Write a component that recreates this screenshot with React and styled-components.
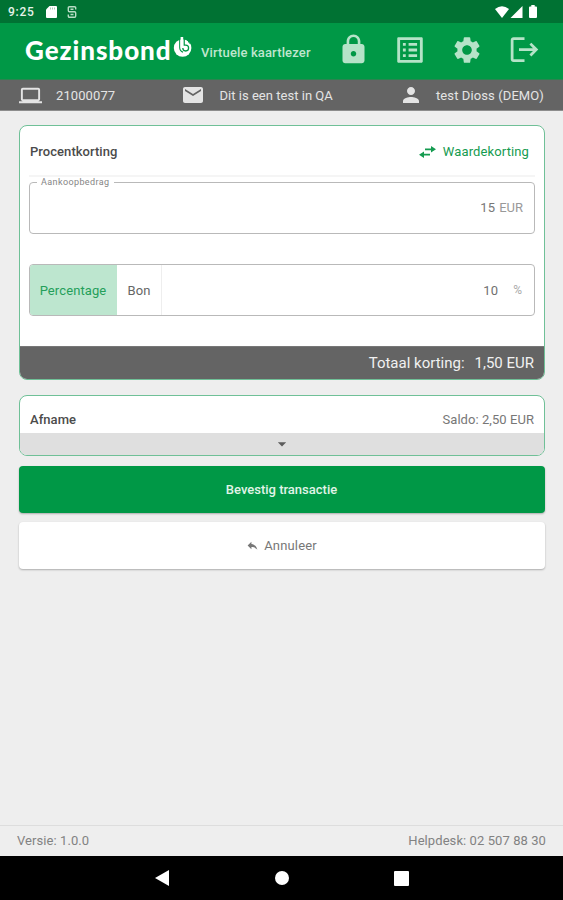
import React from "react";
import styled, { createGlobalStyle } from "styled-components";
import {
  MdLock,
  MdListAlt,
  MdSettings,
  MdLogout,
  MdLaptop,
  MdEmail,
  MdPerson,
  MdReply,
  MdArrowDropDown,
} from "react-icons/md";

const GlobalStyle = createGlobalStyle`
  * {
    box-sizing: border-box;
  }
  body {
    margin: 0;
    background-color: #eeeeee;
    font-family: Roboto, "Liberation Sans", sans-serif;
  }
  svg {
    display: block;
    flex-shrink: 0;
  }
`;

const Screen = styled.div`
  display: flex;
  flex-direction: column;
  width: 563px;
  height: 900px;
  background-color: #eeeeee;
  overflow: hidden;
`;

const StatusBar = styled.div`
  display: flex;
  align-items: center;
  height: 23px;
  padding: 0 26px 0 8px;
  background-color: #007233;
  color: #e6f3ea;
`;
const Clock = styled.span`
  width: 38px;
  padding-top: 1px;
  font-size: 12px;
  font-weight: 500;
  letter-spacing: 0.7px;
`;
const StatusIcons = styled.div`
  display: flex;
  align-items: center;
  gap: ${(props) => props.$gap}px;
  margin-left: ${(props) => (props.$end ? "auto" : "0")};
  padding-top: ${(props) => (props.$end ? "0" : "1px")};
`;

const Header = styled.header`
  display: flex;
  align-items: center;
  height: 57px;
  padding: 0 23px 3px 25px;
  background-color: #009846;
  border-bottom: 1px solid #2b8450;
`;
const Logo = styled.div`
  display: flex;
  width: 176px;
  height: 34px;
`;
const LogoText = styled.span`
  width: 148px;
  color: white;
  font-family: Lato, sans-serif;
  font-size: 26px;
  font-weight: 900;
  line-height: 34px;
  letter-spacing: 0.95px;
`;
const LogoBadge = styled.div`
  padding-top: 4px;
`;
const Subtitle = styled.span`
  padding-top: 6px;
  color: #bfe6ce;
  font-size: 13px;
  font-weight: 500;
  letter-spacing: 0.14px;
  white-space: nowrap;
`;
const HeaderActions = styled.nav`
  display: flex;
  align-items: center;
  gap: 25px;
  margin-left: auto;
  color: #b5e3c8;
`;
const IconButton = styled.button`
  display: flex;
  align-items: center;
  justify-content: center;
  width: 32px;
  height: 34px;
  padding: 0;
  border: none;
  background: none;
  color: inherit;
`;

const InfoBar = styled.div`
  display: flex;
  justify-content: space-between;
  height: 31px;
  padding: 0 19px;
  background-color: #646464;
  border-bottom: 1px solid #8d8d8d;
  color: #e4e4e4;
  font-size: 13px;
`;
const InfoItem = styled.div`
  display: flex;
  align-items: center;
  gap: ${(props) => props.$gap}px;
  letter-spacing: ${(props) => props.$spacing}px;
  white-space: nowrap;
`;

const Main = styled.main`
  display: flex;
  flex: 1;
  flex-direction: column;
  padding: 14px 18px 0 19px;
`;
const Card = styled.section`
  display: flex;
  flex-direction: column;
  height: ${(props) => props.$height}px;
  margin-bottom: ${(props) => props.$space}px;
  border: 1px solid #6fc097;
  border-radius: 8px;
  background-color: white;
  overflow: hidden;
`;
const CardHeader = styled.div`
  display: flex;
  align-items: center;
  justify-content: space-between;
  height: ${(props) => props.$height}px;
  margin: 0 9px;
  padding: ${(props) => props.$padding};
  border-bottom: ${(props) => (props.$divider ? "2px solid #f5f5f5" : "none")};
`;
const Title = styled.h2`
  margin: 0;
  color: #4b4b4b;
  font-size: 13px;
  font-weight: 500;
  letter-spacing: 0.05px;
`;
const SwitchLink = styled.button`
  display: flex;
  align-items: center;
  gap: 7px;
  padding: 0;
  border: none;
  background: none;
  color: #159b50;
  font-family: inherit;
  font-size: 13px;
  letter-spacing: 0.12px;
`;
const AmountField = styled.fieldset`
  height: 57px;
  margin: 0 9px 30px;
  padding: 12px 11px 0;
  border: 1px solid #b9b9b9;
  border-radius: 4px;
  color: #777777;
  font-size: 13px;
  text-align: right;
`;
const FieldLabel = styled.legend`
  margin-left: -4px;
  padding: 0 4px;
  color: #858585;
  font-size: 9px;
  line-height: 11px;
  letter-spacing: 0.4px;
  text-align: left;
`;
const Amount = styled.span`
  margin-right: 4px;
  letter-spacing: 0.2px;
`;
const Unit = styled.span`
  color: #999999;
`;
const DiscountField = styled.div`
  display: flex;
  align-items: center;
  height: 52px;
  margin: 0 9px 30px;
  padding-right: 12px;
  border: 1px solid #b9b9b9;
  border-radius: 4px;
  color: #707070;
  font-size: 13px;
  overflow: hidden;
`;
const Toggle = styled.button`
  width: ${(props) => props.$width}px;
  height: 50px;
  padding: 0;
  border: none;
  border-right: 1px solid ${(props) => (props.$active ? "#bde6cf" : "#eeeeee")};
  background-color: ${(props) => (props.$active ? "#bde6cf" : "white")};
  color: ${(props) => (props.$active ? "#249f5a" : "#666666")};
  font-family: inherit;
  font-size: 13px;
  letter-spacing: 0.1px;
`;
const Percent = styled.span`
  margin-left: auto;
  margin-right: 15px;
  letter-spacing: 0.2px;
`;
const PercentSign = styled.span`
  color: #aaaaaa;
  font-size: 12px;
`;
const Total = styled.div`
  display: flex;
  align-items: center;
  justify-content: flex-end;
  flex: 1;
  gap: 10px;
  padding-right: 10px;
  background-color: #646464;
  border-top: 1px solid #777777;
  color: #f1f1f1;
  font-size: 15px;
`;
const Saldo = styled.span`
  color: #777777;
  font-size: 13px;
  letter-spacing: 0.06px;
`;
const Expander = styled.button`
  display: flex;
  align-items: center;
  justify-content: center;
  flex: 1;
  padding: 0;
  border: none;
  background-color: #dfdfdf;
  color: #5c5c5c;
`;
const Button = styled.button`
  display: flex;
  align-items: center;
  justify-content: center;
  gap: 5px;
  height: 47px;
  margin-bottom: 9px;
  padding: 0 1px 0 0;
  border: none;
  border-radius: 4px;
  background-color: ${(props) => (props.$primary ? "#009846" : "white")};
  box-shadow: 0 1px 2px rgba(0, 0, 0, 0.28);
  color: ${(props) => (props.$primary ? "#e0f4e8" : "#777777")};
  font-family: inherit;
  font-size: 13px;
  font-weight: ${(props) => (props.$primary ? 500 : 400)};
  letter-spacing: ${(props) => (props.$primary ? 0 : 0.15)}px;
`;

const Footer = styled.footer`
  display: flex;
  align-items: center;
  justify-content: space-between;
  height: 31px;
  padding: 0 17px 2px;
  border-top: 1px solid #dddddd;
  color: #828282;
  font-size: 13px;
  letter-spacing: 0.08px;
`;
const NavBar = styled.div`
  display: flex;
  align-items: center;
  justify-content: center;
  gap: 105px;
  height: 44px;
  background-color: black;
`;

function LogoMark() {
  return (
    <svg width="20" height="21" viewBox="0 0 20 21">
      <circle cx="9.6" cy="11" r="8.8" fill="#ffffff" />
      <path d="M6.7 1v9.5q0 3.6 3.4 4.6" fill="none" stroke="#009846" strokeWidth="1.1" />
      <path d="M11.2 1v7.2h1.5a2.9 2.9 0 1 1-2.9 2.9" fill="none" stroke="#009846" strokeWidth="1.3" />
      <path d="M12 1.5q4 1.600 4.500 5" fill="none" stroke="#009846" strokeWidth="1" />
      <path d="M8.9 0v10.500" stroke="#ffffff" strokeWidth="2.6" />
    </svg>
  );
}

function SwapIcon() {
  return (
    <svg width="17" height="12" viewBox="0 0 17 12" fill="currentColor">
      <path d="M6 2.5h6V0l5 3.3-5 3.2V4.2H6z" />
      <path d="M11 7.8H5V5.4L0 8.7 5 12V9.5h6z" />
    </svg>
  );
}

export default function App() {
  return (
    <>
      <GlobalStyle />
      <Screen>
        <StatusBar>
          <Clock>9:25</Clock>
          <StatusIcons $gap={10}>
            <svg width="11" height="12" viewBox="0 0 11 12">
              <path d="M3.5 0H10q1 0 1 1v10q0 1-1 1H1q-1 0-1-1V3.5z" fill="#ffffff" />
              <path d="M4.5 1.5v2M6.5 1.5v2M8.5 1.5v2" stroke="#8fc3a4" strokeWidth="0.8" />
            </svg>
            <svg width="10" height="12" viewBox="0 0 10 12" fill="none" stroke="#b8dcc5" strokeWidth="1.4">
              <path d="M8.7 3.6V2Q8.7.8 7.500.8h-5Q1.300.8 1.300 2v2.600q0 1.200 1.200 1.200h5q1.200 0 1.200 1.200v3q0 1.200-1.200 1.200h-5q-1.200 0-1.200-1.200V8.400M3.500 3.300h3M3.500 8.500h3" />
            </svg>
          </StatusIcons>
          <StatusIcons $gap={1} $end>
            <svg width="14" height="12" viewBox="0 0 14 12">
              <path d="M0 3q7-5.5 14 0L7 12z" fill="#ffffff" />
            </svg>
            <svg width="18" height="12" viewBox="0 0 18 12">
              <path d="M12.500 0v12h-12z" fill="#ffffff" />
            </svg>
            <svg width="8" height="13" viewBox="0 0 8 13">
              <path d="M2.3 0h3.4v1.4H7q1 0 1 1V12q0 1-1 1H1q-1 0-1-1V2.4q0-1 1-1h1.3z" fill="#ffffff" />
            </svg>
          </StatusIcons>
        </StatusBar>

        <Header>
          <Logo>
            <LogoText>Gezinsbond</LogoText>
            <LogoBadge>
              <LogoMark />
            </LogoBadge>
          </Logo>
          <Subtitle>Virtuele kaartlezer</Subtitle>
          <HeaderActions>
            <IconButton aria-label="Vergrendelen">
              <MdLock size={33} />
            </IconButton>
            <IconButton aria-label="Lijst">
              <MdListAlt size={34} />
            </IconButton>
            <IconButton aria-label="Instellingen">
              <MdSettings size={32} />
            </IconButton>
            <IconButton aria-label="Afmelden">
              <MdLogout size={33} />
            </IconButton>
          </HeaderActions>
        </Header>

        <InfoBar>
          <InfoItem $gap={14} $spacing={0.1}>
            <MdLaptop size={23} />
            21000077
          </InfoItem>
          <InfoItem $gap={14} $spacing={0.03}>
            <MdEmail size={24} />
            Dit is een test in QA
          </InfoItem>
          <InfoItem $gap={13} $spacing={0.1}>
            <MdPerson size={24} />
            test Dioss (DEMO)
          </InfoItem>
        </InfoBar>

        <Main>
          <Card $height={255} $space={15}>
            <CardHeader $height={51} $padding="2px 6px 0 1px" $divider>
              <Title>Procentkorting</Title>
              <SwitchLink>
                <SwapIcon />
                Waardekorting
              </SwitchLink>
            </CardHeader>
            <AmountField>
              <FieldLabel>Aankoopbedrag</FieldLabel>
              <Amount>15</Amount>
              <Unit>EUR</Unit>
            </AmountField>
            <DiscountField>
              <Toggle $width={87} $active>
                Percentage
              </Toggle>
              <Toggle $width={45}>Bon</Toggle>
              <Percent>10</Percent>
              <PercentSign>%</PercentSign>
            </DiscountField>
            <Total>
              <span>Totaal korting:</span>
              <span>1,50 EUR</span>
            </Total>
          </Card>

          <Card $height={61} $space={10}>
            <CardHeader $height={37} $padding="10px 1px 0 1px">
              <Title>Afname</Title>
              <Saldo>Saldo: 2,50 EUR</Saldo>
            </CardHeader>
            <Expander aria-label="Uitklappen">
              <MdArrowDropDown size={20} />
            </Expander>
          </Card>

          <Button $primary>Bevestig transactie</Button>
          <Button>
            <MdReply size={13} />
            Annuleer
          </Button>
        </Main>

        <Footer>
          <span>Versie: 1.0.0</span>
          <span>Helpdesk: 02 507 88 30</span>
        </Footer>
        <NavBar>
          <svg width="15" height="16" viewBox="0 0 15 16">
            <path d="M14 0v16L0 8z" fill="#ffffff" />
          </svg>
          <svg width="14" height="14" viewBox="0 0 14 14">
            <circle cx="7" cy="7" r="7" fill="#ffffff" />
          </svg>
          <svg width="15" height="15" viewBox="0 0 15 15">
            <rect width="15" height="15" rx="1" fill="#ffffff" />
          </svg>
        </NavBar>
      </Screen>
    </>
  );
}
